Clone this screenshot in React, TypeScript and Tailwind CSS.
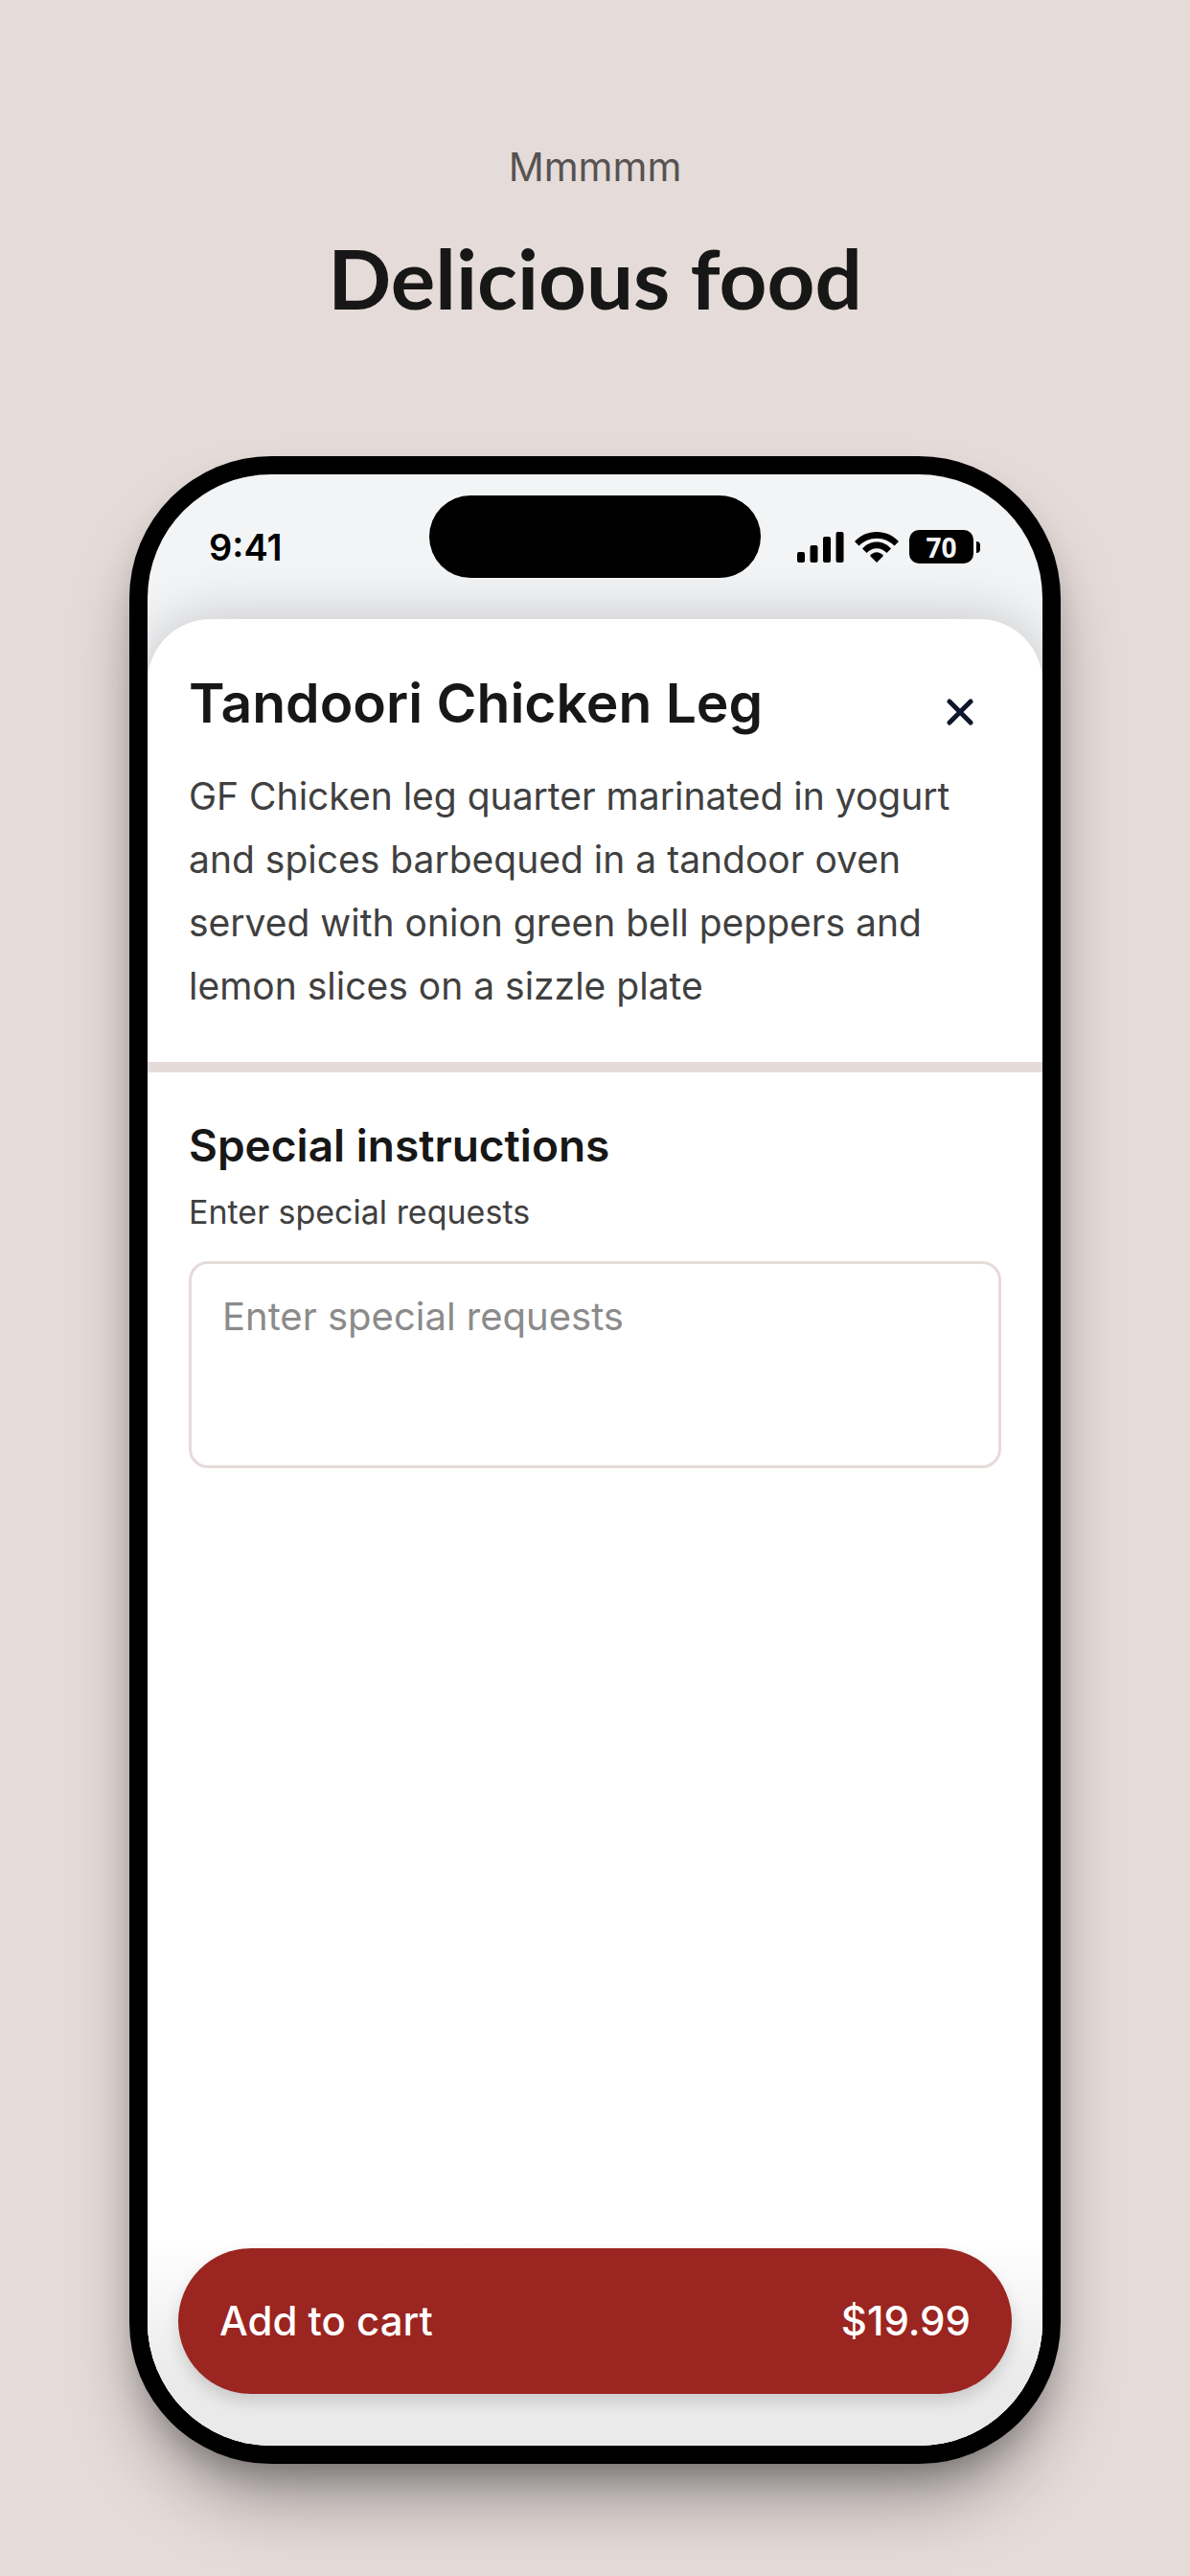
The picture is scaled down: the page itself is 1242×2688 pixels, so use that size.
import { useState } from "react";

const item = {
  name: "Tandoori Chicken Leg",
  description:
    "GF Chicken leg quarter marinated in yogurt and spices barbequed in a tandoor oven served with onion green bell peppers and lemon slices on a sizzle plate",
  price: 19.99,
};

function SignalIcon() {
  return (
    <svg width="49" height="32" viewBox="0 0 49 32" aria-hidden="true">
      <rect x="0" y="21" width="8" height="11" rx="2" />
      <rect x="13.5" y="14" width="8" height="18" rx="2" />
      <rect x="27" y="5" width="8" height="27" rx="2" />
      <rect x="40.5" y="0" width="8" height="32" rx="2" />
    </svg>
  );
}

function WifiIcon() {
  return (
    <svg width="46" height="32" viewBox="0 0 46 32" aria-hidden="true">
      <path d="M0 10C6 3.600 14 0 23 0s17 3.600 23 10l-4.500 4.500C36.500 9.700 30 6.800 23 6.800S9.500 9.700 4.500 14.500z" />
      <path d="M8 17.500C12 13.300 17 10.600 23 10.600s11 2.700 15 6.900l-4.600 4.500C30.600 19.200 27 17.300 23 17.300s-7.600 1.900-10.400 4.700z" />
      <path d="M16 24.900C17.900 22.600 20.300 21.300 23 21.300s5.100 1.300 7 3.600L23 32z" />
    </svg>
  );
}

function Battery() {
  return (
    <div className="flex items-center gap-[3px]">
      <div className="flex h-[35px] w-[67px] items-center justify-center rounded-[10px] bg-black font-['Open_Sans',sans-serif] text-[28px] leading-none font-bold text-[#f3f4f6]">
        70
      </div>
      <div className="h-[12px] w-[4px] rounded-r-full bg-black" />
    </div>
  );
}

function StatusBar() {
  return (
    <div className="relative flex h-[151px] shrink-0 items-center justify-between pr-[65px] pl-[64px]">
      <span className="text-[38px] leading-[48px] font-semibold text-black">
        9:41
      </span>
      <div className="absolute top-[22px] left-1/2 h-[86px] w-[346px] -translate-x-1/2 rounded-full bg-black" />
      <div className="flex items-center gap-[11px]">
        <SignalIcon />
        <WifiIcon />
        <Battery />
      </div>
    </div>
  );
}

function CloseButton() {
  return (
    <button
      type="button"
      aria-label="Close"
      className="flex h-[90px] w-[86px] shrink-0 items-center justify-center text-[#0f172a]"
    >
      <svg
        width="28"
        height="28"
        viewBox="0 0 28 28"
        fill="none"
        stroke="currentColor"
        strokeWidth="5"
        strokeLinecap="round"
      >
        <path d="M3 3l22 22M25 3L3 25" />
      </svg>
    </button>
  );
}

function ItemSheet() {
  const [instructions, setInstructions] = useState("");

  return (
    <section className="flex flex-1 flex-col rounded-t-[66px] bg-white shadow-[0_0_60px_rgba(0,0,0,0.2)]">
      <div className="border-b-[11px] border-[#e5dbd9] px-[43px] pt-[52px] pb-[46px]">
        <div className="flex items-start justify-between">
          <h2 className="text-[57px] leading-[72px] font-semibold text-[#171717]">
            {item.name}
          </h2>
          <CloseButton />
        </div>
        <p className="pt-[10px] text-[39px] leading-[66px] text-[#404040]">
          {item.description}
        </p>
      </div>

      <div className="flex flex-col px-[43px] pt-[48px]">
        <h3 className="text-[46px] leading-[56px] font-semibold text-[#171717]">
          Special instructions
        </h3>
        <label
          htmlFor="instructions"
          className="pt-[18px] text-[34px] leading-[48px] text-[#404040]"
        >
          Enter special requests
        </label>
        <textarea
          id="instructions"
          value={instructions}
          onChange={(e) => setInstructions(e.target.value)}
          placeholder="Enter special requests"
          className="mt-[27px] h-[216px] resize-none rounded-[20px] border-[3px] border-[#e5dbd9] px-[32px] py-[25px] text-[40px] leading-[60px] text-[#404040] outline-none placeholder:text-[#8b8b8b]"
        />
      </div>

      <div className="mt-auto bg-linear-to-b from-white to-[#eaeaea] to-70% px-8 pt-[12px] pb-[54px]">
        <button
          type="button"
          className="flex h-[152px] w-full items-center justify-between rounded-full bg-[#9b2520] px-[43px] text-[42px] leading-[56px] font-medium text-white shadow-[0_8px_16px_rgba(0,0,0,0.14)]"
        >
          <span>Add to cart</span>
          <span>${item.price}</span>
        </button>
      </div>
    </section>
  );
}

function App() {
  return (
    <main className="flex min-h-screen flex-col bg-[#e5dbd9] px-[135px] pt-[146px] pb-[117px] font-['Inter',sans-serif]">
      <header className="flex flex-col items-center gap-[36px]">
        <p className="text-[41px] leading-[56px] text-[#575352]">Mmmmm</p>
        <h1 className="font-['Lato',sans-serif] text-[87px] leading-[104px] font-bold text-[#171717]">
          Delicious food
        </h1>
      </header>

      <div className="mt-[134px] flex flex-1 flex-col rounded-[148px] bg-black p-[19px] shadow-[0_48px_80px_-20px_rgba(0,0,0,0.4),0_20px_36px_-12px_rgba(0,0,0,0.25)]">
        <div className="flex flex-1 flex-col overflow-hidden rounded-[129px] bg-[#f3f4f6]">
          <StatusBar />
          <ItemSheet />
        </div>
      </div>
    </main>
  );
}

export default App;
